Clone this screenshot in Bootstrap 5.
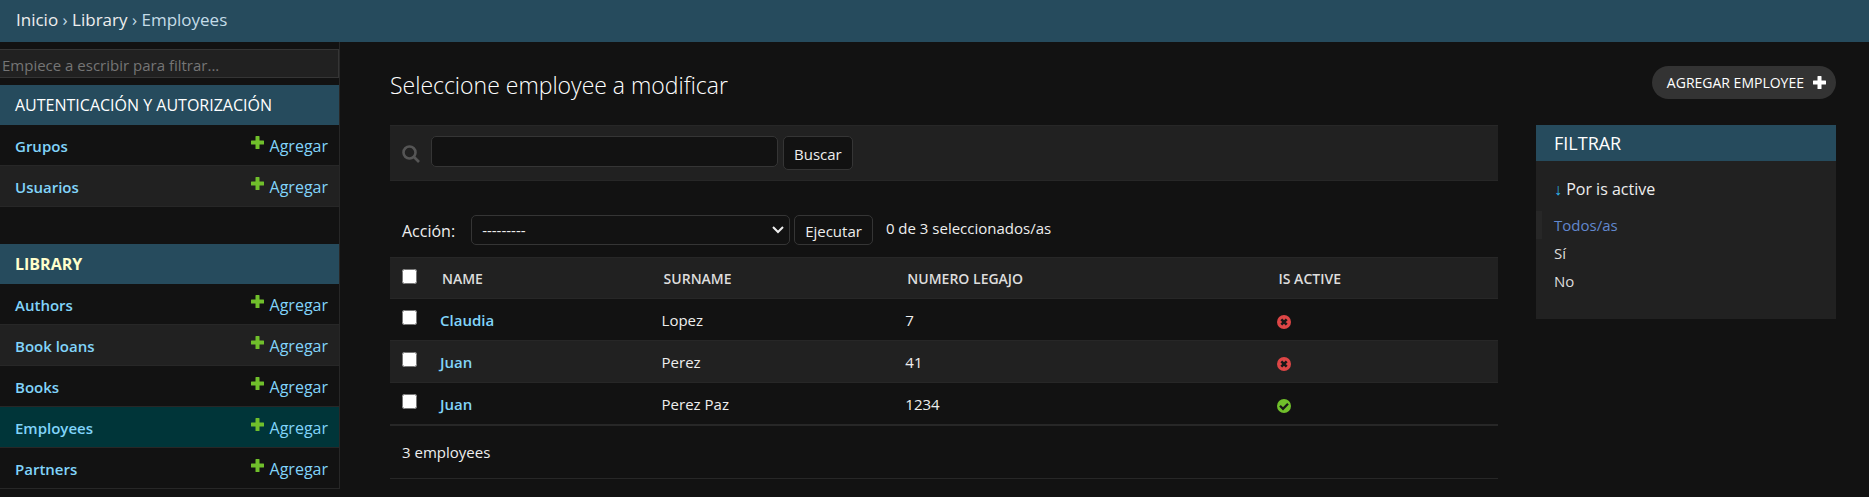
<!DOCTYPE html>
<html lang="es" data-bs-theme="dark">
<head>
<meta charset="utf-8">
<meta name="viewport" content="width=device-width, initial-scale=1">
<title>Seleccione employee a modificar</title>
<link href="https://cdn.jsdelivr.net/npm/bootstrap@5.3.0/dist/css/bootstrap.min.css" rel="stylesheet">
<style>
:root { --bar: #264b5d; --dark: #121212; --panel: #212121; --line: #272727; --edge: #353535; --sky: #81d4fa; }
body { font-family: "Open Sans", "Noto Sans", sans-serif; font-size: 15px; line-height: 20px; background: var(--dark); color: #eee; }
a { text-decoration: none; color: var(--sky); }
.topbar { background: var(--bar); height: 42px; padding: 0 16px 2px; font-size: 17px; color: #c4dce8; }
.topbar a { color: #eee; }
.side { width: 340px; border-right: 1px solid var(--line); padding-top: 7px; }
.side-filter { height: 29px; padding: 4px 2px 2px; border: 1px solid var(--edge); background: var(--panel); color: #eee; margin-bottom: 7px; border-left: 0; }
.side-filter::placeholder { color: #757575; opacity: 1; }
.app-list { margin-bottom: 37px; table-layout: fixed; border-collapse: separate; border-spacing: 0; }
.app-list caption { caption-side: top; height: 40px; padding: 10px 15px; background: var(--bar); font-size: 16px; }
.app-list caption a { color: #fff; }
.app-list .here a { color: #ffffcc; font-weight: 700; }
.app-list tr:nth-child(even) { background: var(--panel); }
.app-list tr.picked { background: #003539; }
.app-list th, .app-list td { height: 41px; padding: 2px 11px 0 15px; font-weight: 600; border-bottom: 1px solid var(--line); }
.app-list td { font-weight: 400; font-size: 16px; text-align: right; }
.app-list svg { margin: -10px 1px 0 0; }
.main-area { padding: 22px 33px 0 50px; min-width: 0; }
h1 { font-size: 23px; line-height: 42px; font-weight: 300; margin: 0; }
.add-btn { background: #333; color: #fff; border-radius: 17px; height: 33px; padding: 0 10px 0 15px; font-size: 14px; gap: 9px; margin-top: 2px; }
.headline { margin-bottom: 19px; }
.split { gap: 38px; }
.tools { background: var(--panel); border: 1px solid var(--line); border-width: 1px 0; height: 56px; padding: 10px 12px; }
.box, .act { background: var(--dark); border: 1px solid var(--edge); border-radius: 5px; color: #eee; padding: 0 10px; }
.act { padding-top: 2px; }
.tools .box { width: 347px; height: 31px; margin: 0 5px 0 11px; }
.tools .act { height: 34px; }
.tools svg { margin-top: 9px; }
.acts { padding: 34px 12px 12px; }
.acts label { font-size: 16px; padding-top: 2px; }
.acts .box { width: 319px; height: 30px; margin: 0 4px 0 16px; padding-right: 0; appearance: none; background: var(--dark) url("data:image/svg+xml,%3Csvg xmlns='http://www.w3.org/2000/svg' viewBox='0 0 12 8'%3E%3Cpath d='M1 1l5 5 5-5' fill='none' stroke='%23eee' stroke-width='2'/%3E%3C/svg%3E") no-repeat right 5px center / 12px 8px; }
.acts .act { height: 30px; }
.acts .count { margin: -4px 0 0 13px; }
.results { table-layout: fixed; border-collapse: separate; border-spacing: 0; border-bottom: 2px solid var(--line); }
.results th, .results td { padding: 11px 10px 0; height: 42px; vertical-align: top; border-top: 1px solid var(--line); }
.results thead th { background: var(--panel); height: 41px; font-size: 14px; font-weight: 600; padding-left: 12px; color: #ddd; }
.results tbody th { font-weight: 600; }
.results tbody tr:nth-child(even) { background: var(--panel); }
.results .tick { padding: 11px 0 0 12px; }
.results input { width: 15px; height: 15px; margin: 0; color-scheme: light; display: block; }
.c-tick { width: 40px; } .c-name { width: 20%; } .c-sur { width: 22%; } .c-num { width: 33.5%; }
.pager { border-bottom: 1px solid var(--line); padding: 16px 12px; margin: 0; }
.filters { width: 300px; background: var(--panel); }
.filters h2 { background: var(--bar); font-size: 18px; line-height: 36px; font-weight: 400; padding: 0 18px; margin: 0 0 18px; }
.filters summary { list-style: none; padding: 0 18px; font-size: 16px; margin-bottom: 12px; }
.filters summary span { color: #2fb4f0; }
.filters ul { margin: 0; padding: 0 0 24px; }
.filters li a { display: block; line-height: 28px; padding-left: 12px; border-left: 6px solid transparent; color: #ddd; }
.filters li.on a { color: #6188cf; border-color: #272727; }
</style>
</head>
<body>
<svg class="d-none" aria-hidden="true">
  <symbol id="plus" viewBox="0 0 13 13"><path d="M5 0h3q.5 0 .5.5v4h4q.5 0 .5.5v3q0 .5-.5.5h-4v4q0 .5-.5.5H5q-.5 0-.5-.5v-4h-4Q0 8.500 0 8V5q0-.5.5-.5h4v-4Q4.500 0 5 0z"/></symbol>
  <symbol id="no" viewBox="0 0 14 14"><circle cx="7" cy="7" r="7" fill="#dd4646"/><path d="M4.300 4.300l5.400 5.400m0-5.400l-5.400 5.400" stroke="#181818" stroke-width="2.600"/></symbol>
  <symbol id="yes" viewBox="0 0 14 14"><circle cx="7" cy="7" r="7" fill="#70bf2b"/><path d="M3 6.800l3 3 5-5" fill="none" stroke="#181818" stroke-width="2.300"/></symbol>
</svg>
<nav class="topbar d-flex align-items-center" aria-label="Ruta"><div><a href="#">Inicio</a> › <a href="#">Library</a> › Employees</div></nav>
<div class="d-flex">
  <nav class="side flex-shrink-0" aria-label="Barra lateral">
    <input class="side-filter w-100 d-block" type="search" placeholder="Empiece a escribir para filtrar..." aria-label="Filtrar">
    <table class="app-list w-100">
      <caption><a href="#">AUTENTICACIÓN Y AUTORIZACIÓN</a></caption>
      <tbody>
      <tr><th scope="row"><a href="#">Grupos</a></th><td><a href="#"><svg width="13" height="13" fill="#70bf2b"><use href="#plus"/></svg> Agregar</a></td></tr>
      <tr><th scope="row"><a href="#">Usuarios</a></th><td><a href="#"><svg width="13" height="13" fill="#70bf2b"><use href="#plus"/></svg> Agregar</a></td></tr>
      </tbody>
    </table>
    <table class="app-list w-100 mb-0">
      <caption class="here"><a href="#">LIBRARY</a></caption>
      <tbody>
      <tr><th scope="row"><a href="#">Authors</a></th><td><a href="#"><svg width="13" height="13" fill="#70bf2b"><use href="#plus"/></svg> Agregar</a></td></tr>
      <tr><th scope="row"><a href="#">Book loans</a></th><td><a href="#"><svg width="13" height="13" fill="#70bf2b"><use href="#plus"/></svg> Agregar</a></td></tr>
      <tr><th scope="row"><a href="#">Books</a></th><td><a href="#"><svg width="13" height="13" fill="#70bf2b"><use href="#plus"/></svg> Agregar</a></td></tr>
      <tr class="picked"><th scope="row"><a href="#">Employees</a></th><td><a href="#"><svg width="13" height="13" fill="#70bf2b"><use href="#plus"/></svg> Agregar</a></td></tr>
      <tr><th scope="row"><a href="#">Partners</a></th><td><a href="#"><svg width="13" height="13" fill="#70bf2b"><use href="#plus"/></svg> Agregar</a></td></tr>
      </tbody>
    </table>
  </nav>
  <main class="main-area flex-grow-1">
    <div class="headline d-flex justify-content-between align-items-start">
      <h1>Seleccione employee a modificar</h1>
      <a class="add-btn d-flex align-items-center" href="#">AGREGAR EMPLOYEE <svg width="13" height="13" fill="#fff"><use href="#plus"/></svg></a>
    </div>
    <div class="split d-flex align-items-start">
      <div class="flex-grow-1">
        <form class="tools d-flex align-items-start">
          <svg width="18" height="18" viewBox="0 0 18 18" fill="none" stroke="#555" stroke-width="2.600"><circle cx="7.500" cy="7.500" r="6"/><path d="M12 12l5 5"/></svg>
          <input class="box" type="text" aria-label="Buscar employee">
          <button class="act" type="button">Buscar</button>
        </form>
        <form class="acts d-flex align-items-center">
          <label for="action">Acción:</label>
          <select class="box" id="action"><option>---------</option></select>
          <button class="act" type="button">Ejecutar</button>
          <span class="count">0 de 3 seleccionados/as</span>
        </form>
        <table class="results w-100">
          <colgroup><col class="c-tick"><col class="c-name"><col class="c-sur"><col class="c-num"><col></colgroup>
          <thead><tr><th class="tick"><input type="checkbox" aria-label="Seleccionar todo"></th><th>NAME</th><th>SURNAME</th><th>NUMERO LEGAJO</th><th>IS ACTIVE</th></tr></thead>
          <tbody>
            <tr><td class="tick"><input type="checkbox" aria-label="Claudia Lopez"></td><th scope="row"><a href="#">Claudia</a></th><td>Lopez</td><td>7</td><td><svg width="14" height="14"><use href="#no"/></svg></td></tr>
            <tr><td class="tick"><input type="checkbox" aria-label="Juan Perez"></td><th scope="row"><a href="#">Juan</a></th><td>Perez</td><td>41</td><td><svg width="14" height="14"><use href="#no"/></svg></td></tr>
            <tr><td class="tick"><input type="checkbox" aria-label="Juan Perez Paz"></td><th scope="row"><a href="#">Juan</a></th><td>Perez Paz</td><td>1234</td><td><svg width="14" height="14"><use href="#yes"/></svg></td></tr>
          </tbody>
        </table>
        <p class="pager">3 employees</p>
      </div>
      <aside class="filters flex-shrink-0">
        <h2>FILTRAR</h2>
        <details open>
          <summary><span>↓</span> Por is active</summary>
          <ul class="list-unstyled">
            <li class="on"><a href="#">Todos/as</a></li>
            <li><a href="#">Sí</a></li>
            <li><a href="#">No</a></li>
          </ul>
        </details>
      </aside>
    </div>
  </main>
</div>
<script src="https://cdn.jsdelivr.net/npm/bootstrap@5.3.0/dist/js/bootstrap.bundle.min.js"></script>
</body>
</html>
